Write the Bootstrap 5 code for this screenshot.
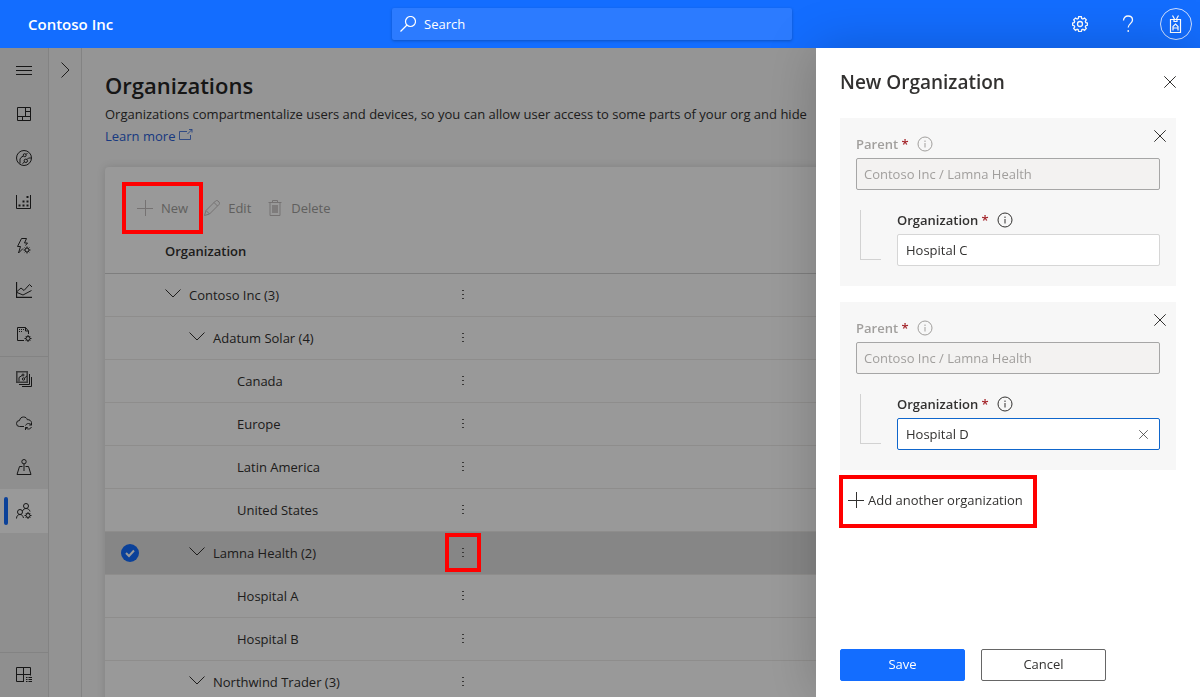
<!DOCTYPE html>
<html lang="en">
<head>
<meta charset="utf-8">
<meta name="viewport" content="width=device-width, initial-scale=1">
<title>Organizations - Contoso Inc</title>
<link href="https://cdn.jsdelivr.net/npm/bootstrap@5.3.0/dist/css/bootstrap.min.css" rel="stylesheet">
<style>
  :root { --brand: #136dff; --ink: #323130; --muted: #a19f9d; --line: #dadada; --header-h: 48px; }
  body { font-family: "Open Sans", "Noto Sans", sans-serif; font-size: 13px; line-height: 20px; color: var(--ink); background: #f8f8f8; }
  svg { display: block; fill: none; stroke: currentColor; flex: none; }
  button { color: inherit; }
  .plain-btn { background: none; border: 0; padding: 0; }

  /* header */
  .app-header { display: grid; grid-template-columns: 49fr 50fr 51fr; height: var(--header-h); background: var(--brand); color: #fff; }
  .brand-name { font-size: 15px; font-weight: 600; color: #fff; padding-left: 28px; }
  .search-box { height: 32px; background: #2c7bff; border-radius: 2px; box-shadow: 0 1px 3px rgba(0, 0, 0, .25); }
  .search-box input { background: none; border: 0; outline: 0; color: #fff; padding: 0; }
  .search-box input::placeholder { color: #fff; opacity: 1; }
  .header-btn { width: 48px; height: 48px; }
  .avatar-ring { width: 32px; height: 32px; border: 1px solid #cfe0ff; }

  /* navigation */
  .side-rail { width: 49px; background: #efefef; border-right: 1px solid var(--line); }
  .side-rail a { height: 44px; color: #262626; }
  .side-rail a.active { background: #fff; position: relative; }
  .side-rail a.active::before { content: ""; position: absolute; left: 4px; top: 8px; bottom: 8px; width: 4px; border-radius: 2px; background: var(--brand); }
  .rail-group { border-top: 1px solid var(--line); }
  .sub-rail { width: 33px; border-right: 1px solid var(--line); background: #f6f6f6; }
  .sub-rail button { height: 44px; }

  /* content */
  .content { padding: 23px 0 0 23px; }
  .content h1 { font-size: 22px; line-height: 28px; font-weight: 600; color: #262626; }
  .content a { color: #2a5fd6; }
  .intro { line-height: 22px; white-space: nowrap; }
  .org-card { margin-top: 20px; background: #fff; border-radius: 4px 0 0 0; box-shadow: 0 0 8px rgba(0, 0, 0, .13); padding-top: 19px; }
  .toolbar { height: 44px; padding-left: 32px; color: var(--muted); }
  .toolbar svg { color: #c4bfbf; }
  .org-table { width: 100%; table-layout: fixed; border-collapse: collapse; }
  .org-table th, .org-table td { height: 43px; padding: 0; vertical-align: middle; border-bottom: 1px solid #edebe9; }
  .org-table thead th { font-weight: 600; border-bottom-color: #d2d2d2; }
  .org-table tr.selected td { background: #dfdfdf; }
  .org-table .check-col { width: 60px; }
  .org-table .name-col { width: 282px; }
  .org-table .menu-col { width: 32px; }
  .level-1 { padding-left: 24px; }
  .level-2 { padding-left: 72px; }
  .more-btn { width: 32px; height: 31px; color: #605e5c; }

  /* red frames lie over the dimmed page */
  .framed { position: relative; }
  .frame { position: absolute; z-index: 1060; border: 4px solid #f00; pointer-events: none; }
  .frame-new { inset: -4px -15px -4px -15px; }
  .frame-more { inset: -4px -2px; }
  .frame-add { inset: -11px -14px -14px -9px; }

  /* panel */
  .page-dim { position: fixed; inset: var(--header-h) 0 0 0; z-index: 1040; background: rgba(0, 0, 0, .4); }
  .org-panel.offcanvas { --bs-offcanvas-width: 384px; top: var(--header-h); border: 0; color: var(--ink); background: #fff; box-shadow: 0 0 50px rgba(0, 0, 0, .2); }
  .org-panel h2 { font-size: 19px; line-height: 28px; font-weight: 600; }
  .org-panel form { padding: 22px 24px 16px; }
  .entry { background: #f7f7f7; padding: 16px 16px 20px; position: relative; }
  .entry-close { position: absolute; top: 10px; right: 8px; width: 16px; height: 16px; }
  .entry label { font-weight: 600; }
  .entry .req { color: #a4262c; }
  .entry .form-control { height: 32px; border-radius: 2px; font-size: 13px; padding: 0 8px; color: var(--ink); border-color: #d6d6d6; box-shadow: none; }
  .entry .form-control:disabled { background: #f3f2f1; border-color: #a6a6a6; color: var(--muted); padding: 0 7px; }
  .entry .form-control.is-current { border-color: #0f66cc; }
  .muted { color: var(--muted); }
  .branch { width: 21px; height: 50px; margin-left: 4px; border-left: 1px solid #d2d2d2; border-bottom: 1px solid #d2d2d2; }
  .child { margin-top: 20px; gap: 16px; }
  .clear-btn { position: absolute; right: 8px; top: 8px; }
  .panel-btn { width: 125px; height: 32px; border-radius: 2px; font-size: 13px; padding: 0; }
  .panel-save { background: var(--brand); border-color: var(--brand); color: #fff; }
  .panel-cancel { background: #fff; border-color: #666; color: var(--ink); }
</style>
</head>
<body class="vh-100 overflow-hidden d-flex flex-column">

<svg width="0" height="0" class="position-absolute" aria-hidden="true">
  <symbol id="i-down" viewBox="0 0 16 16"><path d="M.5 4.500 8 12l7.500-7.500"/></symbol>
  <symbol id="i-x" viewBox="0 0 12 12"><path d="M.3.300l11.400 11.400M11.700.300.300 11.700"/></symbol>
  <symbol id="i-plus" viewBox="0 0 16 16"><path d="M8.500 0v16M0 8.500h16"/></symbol>
  <symbol id="i-more" viewBox="0 0 4 12"><path d="M1 1.500h2M1 5.500h2M1 9.500h2"/></symbol>
  <symbol id="i-info" viewBox="0 0 16 16"><circle cx="8" cy="8" r="7"/><path d="M8 7v4.500M8 4.500V6"/></symbol>
  <symbol id="i-gear" viewBox="0 0 16 16"><path stroke-width="1.300" d="M6.700.6h2.600l.4 1.900 1.200.5 1.600-1 1.800 1.800-1 1.600.5 1.200 1.700.4v2.200l-1.700.5-.5 1.200 1 1.600-1.800 1.800-1.600-1-1.200.5-.4 1.800H6.700l-.4-1.800-1.200-.5-1.600 1-1.800-1.800 1-1.600-.5-1.200L.5 9.200V7l1.700-.4.5-1.200-1-1.600L3.500 2l1.600 1 1.200-.5z"/><circle cx="8" cy="8" r="2.500" stroke-width="1.300"/></symbol>
</svg>

<header class="app-header">
  <div class="d-flex align-items-center"><a href="#" class="brand-name text-decoration-none">Contoso Inc</a></div>
  <label class="search-box d-flex align-items-center align-self-center gap-2 px-2">
    <svg width="16" height="16" viewBox="0 0 16 16" stroke-width="1.200"><circle cx="10.500" cy="5.500" r="5"/><path d="M7 9 .5 15.500"/></svg>
    <input type="search" class="flex-grow-1" placeholder="Search" aria-label="Search">
  </label>
  <div class="d-flex justify-content-end">
    <button type="button" class="plain-btn header-btn d-flex align-items-center justify-content-center" aria-label="Settings"><svg width="16" height="16"><use href="#i-gear"/></svg></button>
    <button type="button" class="plain-btn header-btn d-flex align-items-center justify-content-center" aria-label="Help"><svg width="12" height="18" viewBox="0 0 12 18" stroke-width="1.300"><path d="M1.500 5.500C1.500 2.700 3.500 1 6 1s4.500 1.600 4.500 4c0 3.300-4.300 4-4.300 7.500M6.200 15v2"/></svg></button>
    <button type="button" class="plain-btn header-btn d-flex align-items-center justify-content-center" aria-label="Account">
      <span class="avatar-ring rounded-circle d-flex align-items-center justify-content-center"><svg width="14" height="18" viewBox="0 0 14 18" stroke-width="1.200"><path d="M1.500 4.500h10v13h-10zM3.500.5l2 3.500M9.500.5l-2 3.500M5 4.500h3v2H5zM4 15.500v-4L6.500 9 9 11.500v4M4 13h5"/></svg></span>
    </button>
  </div>
</header>

<div class="d-flex flex-grow-1 overflow-hidden">
  <nav class="side-rail d-flex flex-column flex-shrink-0" aria-label="Main">
    <a href="#" class="d-flex align-items-center justify-content-center" aria-label="Menu"><svg width="16" height="16" viewBox="0 0 16 16"><path d="M0 4.500h16M0 8.500h16M0 12.500h16"/></svg></a>
    <a href="#" class="d-flex align-items-center justify-content-center" aria-label="Dashboards"><svg width="16" height="16" viewBox="0 0 16 16"><path d="M1.500 1.500h13v13h-13zM9.500 1.500v9M9.500 5.500h5M1.500 10.500h13M6.500 10.500v4"/></svg></a>
    <a href="#" class="d-flex align-items-center justify-content-center" aria-label="Devices"><svg width="16" height="16" viewBox="0 0 16 16"><circle cx="8" cy="8" r="7.500"/><circle cx="8.700" cy="5.200" r="1.500"/><circle cx="9.800" cy="10.800" r="1.700"/><path d="M7.300 6 5 7.500 4 9v4.500M8.500 12l-2 1.500M11 9.500l1.500-1.500H15M10 4.500l1.500-1.500"/></svg></a>
    <a href="#" class="d-flex align-items-center justify-content-center" aria-label="Device groups"><svg width="16" height="16" viewBox="0 0 16 16"><path d="M.5 1v13.500h14V1"/><path d="M2.500 11.500h2m2 0h2m2 0h2M6.500 7.500h2m2 0h2M10.500 3h2" stroke-width="2"/></svg></a>
    <a href="#" class="d-flex align-items-center justify-content-center" aria-label="Rules"><svg width="16" height="16" viewBox="0 0 16 16"><path d="M5.500.5h5L8.500 5h3L9.500 7.500M5.500.5 1.500 8.500h3l-2 6.500L7 10.500"/><circle cx="11" cy="12" r="2"/><path d="M11 8.500V10M11 14v1.500M7.500 12H9M13 12h1.500M8.700 9.500l1 1M12.300 13.300l1 1M13.300 9.500l-1 1M9.700 13.300l-1 1"/></svg></a>
    <a href="#" class="d-flex align-items-center justify-content-center" aria-label="Analytics"><svg width="16" height="16" viewBox="0 0 16 16"><path d="M.5 0v15.500H16" stroke-width="1.300"/><path d="M1 9.500 5 6l3 2.500 5.500-6L16 5M1 10.500l6 2.500 8.500-4.500"/></svg></a>
    <a href="#" class="d-flex align-items-center justify-content-center" aria-label="Jobs"><svg width="16" height="16" viewBox="0 0 16 16"><path d="M8 14.500H1.500v-13h8L12.500 5v3M9.500 1.500V5h3"/><path d="M3 3.500h5M3 5.500h4" stroke-dasharray="1 1"/><circle cx="12" cy="12.500" r="2"/><path d="M12 9v1.500M12 14.500V16M8.500 12.500H10M14 12.500h1.500M9.700 10l1 1M13.300 13.800l1 1M14.300 10l-1 1M10.700 13.800l-1 1"/></svg></a>
    <div class="rail-group">
      <a href="#" class="d-flex align-items-center justify-content-center" aria-label="Device templates"><svg width="16" height="16" viewBox="0 0 16 16"><path d="M.8.800h10.400v10.400H.8z" stroke-width="1.600" opacity=".7"/><path d="M13.500 3v10.500H3M15.500 6v9.500H6"/><circle cx="7" cy="4" r="1"/><circle cx="7.500" cy="8" r="1.200"/><path d="M6 4.500 3 6.500v4M8.500 7 11 5"/></svg></a>
      <a href="#" class="d-flex align-items-center justify-content-center" aria-label="Data export"><svg width="16" height="16" viewBox="0 0 16 16"><path d="M8 11.500H3.500a3 3 0 0 1 0-6c.5-2.300 2-3.500 4-3.500s3.300 1 3.800 2.700c2.200-.2 3.700.8 4.200 2.800"/><path d="M9.500 10.500c.8-1.500 2-2 3-2 1.200 0 2.200.6 3 1.500V7.500M15.500 10h-2.300M15.500 12c-.8 1.500-1.800 2-3 2s-2.200-.6-3-1.500V15M9.500 12.500h2.300"/></svg></a>
      <a href="#" class="d-flex align-items-center justify-content-center" aria-label="Customization"><svg width="16" height="16" viewBox="0 0 16 16"><circle cx="8" cy="2.700" r="2.200"/><path d="M8 5v7M6.500 7.500h-3l-2.500 8h14l-2.500-8h-3"/></svg></a>
      <a href="#" class="active d-flex align-items-center justify-content-center" aria-label="Permissions"><svg width="16" height="16" viewBox="0 0 16 16"><circle cx="10" cy="3" r="2.500"/><circle cx="4" cy="9" r="2.500"/><path d="M.5 15.500C.5 13 2 11.500 4 11.500S7 13 7.500 15M6.500 8C7 6.500 8.500 5.500 10 5.500c2 0 3.500 1 4 3"/><circle cx="12" cy="12.500" r="2"/><path d="M12 9v1.500M12 14.500V16M8.500 12.500H10M14 12.500h1.500M9.700 10l1 1M13.300 13.800l1 1M14.300 10l-1 1M10.700 13.800l-1 1"/></svg></a>
    </div>
    <div class="rail-group mt-auto">
      <a href="#" class="d-flex align-items-center justify-content-center" aria-label="Application templates"><svg width="16" height="16" viewBox="0 0 16 16"><path d="M8 14.500H.5V.5h14v8M.5 7.500h14M7.500.5v14"/><path d="M10 10.500h1.500M12.500 10.500H16M10 12.500h1.500M12.500 12.500H16M10 14.500h1.500M12.500 14.500H16"/></svg></a>
    </div>
  </nav>
  <div class="sub-rail flex-shrink-0">
    <button type="button" class="plain-btn w-100 d-flex align-items-center justify-content-center" aria-label="Expand"><svg width="16" height="16" viewBox="0 0 16 16"><path d="M4.500.5 12 8l-7.500 7.500"/></svg></button>
  </div>

  <main class="content flex-grow-1 overflow-hidden">
    <h1 class="mb-0">Organizations</h1>
    <p class="intro mb-0 pt-1">Organizations compartmentalize users and devices, so you can allow user access to some parts of your org and hide</p>
    <p class="intro d-flex mb-0"><a href="#" class="text-decoration-none d-flex gap-1">Learn more <svg width="14" height="12" viewBox="0 0 14 12" class="mt-1"><path d="M8 2.500H.5v8h11V6M8.500 5 13 .5M10 .5h3v3" opacity=".8"/></svg></a></p>

    <section class="org-card" aria-label="Organization list">
      <div class="toolbar d-flex gap-3">
        <button type="button" class="plain-btn framed d-flex align-items-center gap-2"><svg width="16" height="16"><use href="#i-plus"/></svg>New<span class="frame frame-new"></span></button>
        <button type="button" class="plain-btn d-flex align-items-center gap-2"><svg width="16" height="16" viewBox="0 0 16 16"><path d="M.5 15.500l1.500-5L11.500 1a1.800 1.800 0 0 1 2.500 0l1 1a1.800 1.800 0 0 1 0 2.500L5.500 14zM10 2.500 13.500 6M2 10.500 5.500 14"/></svg>Edit</button>
        <button type="button" class="plain-btn d-flex align-items-center gap-2"><svg width="16" height="16" viewBox="0 0 16 16"><path d="M1.500 2.500h13M5.500 2.500v-2h5v2M3 2.500v13h10v-13"/><path d="M6 5v8M8 5v8M10 5v8" stroke-width="1.500"/></svg>Delete</button>
      </div>
      <table class="org-table">
        <colgroup><col class="check-col"><col class="name-col"><col class="menu-col"><col></colgroup>
        <thead><tr><th></th><th scope="col">Organization</th><th></th><th></th></tr></thead>
        <tbody>
          <tr><td></td><td><div class="d-flex gap-2"><svg width="16" height="16"><use href="#i-down"/></svg>Contoso Inc (3)</div></td><td><button type="button" class="plain-btn more-btn d-flex align-items-center justify-content-center" aria-label="More"><svg width="4" height="12"><use href="#i-more"/></svg></button></td><td></td></tr>
          <tr><td></td><td><div class="level-1 d-flex gap-2"><svg width="16" height="16"><use href="#i-down"/></svg>Adatum Solar (4)</div></td><td><button type="button" class="plain-btn more-btn d-flex align-items-center justify-content-center" aria-label="More"><svg width="4" height="12"><use href="#i-more"/></svg></button></td><td></td></tr>
          <tr><td></td><td><div class="level-2">Canada</div></td><td><button type="button" class="plain-btn more-btn d-flex align-items-center justify-content-center" aria-label="More"><svg width="4" height="12"><use href="#i-more"/></svg></button></td><td></td></tr>
          <tr><td></td><td><div class="level-2">Europe</div></td><td><button type="button" class="plain-btn more-btn d-flex align-items-center justify-content-center" aria-label="More"><svg width="4" height="12"><use href="#i-more"/></svg></button></td><td></td></tr>
          <tr><td></td><td><div class="level-2">Latin America</div></td><td><button type="button" class="plain-btn more-btn d-flex align-items-center justify-content-center" aria-label="More"><svg width="4" height="12"><use href="#i-more"/></svg></button></td><td></td></tr>
          <tr><td></td><td><div class="level-2">United States</div></td><td><button type="button" class="plain-btn more-btn d-flex align-items-center justify-content-center" aria-label="More"><svg width="4" height="12"><use href="#i-more"/></svg></button></td><td></td></tr>
          <tr class="selected"><td><svg width="18" height="18" viewBox="0 0 18 18" class="ms-3" stroke="none"><circle cx="9" cy="9" r="9" fill="#136dff" stroke="none"/><path d="M5 9l3 3 5-5.500" stroke="#fff" stroke-width="2"/></svg></td><td><div class="level-1 d-flex gap-2"><svg width="16" height="16"><use href="#i-down"/></svg>Lamna Health (2)</div></td><td><button type="button" class="plain-btn more-btn framed d-flex align-items-center justify-content-center" aria-label="More"><svg width="4" height="12"><use href="#i-more"/></svg><span class="frame frame-more"></span></button></td><td></td></tr>
          <tr><td></td><td><div class="level-2">Hospital A</div></td><td><button type="button" class="plain-btn more-btn d-flex align-items-center justify-content-center" aria-label="More"><svg width="4" height="12"><use href="#i-more"/></svg></button></td><td></td></tr>
          <tr><td></td><td><div class="level-2">Hospital B</div></td><td><button type="button" class="plain-btn more-btn d-flex align-items-center justify-content-center" aria-label="More"><svg width="4" height="12"><use href="#i-more"/></svg></button></td><td></td></tr>
          <tr><td></td><td><div class="level-1 d-flex gap-2"><svg width="16" height="16"><use href="#i-down"/></svg>Northwind Trader (3)</div></td><td><button type="button" class="plain-btn more-btn d-flex align-items-center justify-content-center" aria-label="More"><svg width="4" height="12"><use href="#i-more"/></svg></button></td><td></td></tr>
        </tbody>
      </table>
    </section>
  </main>
</div>

<div class="page-dim"></div>

<aside class="org-panel offcanvas offcanvas-end show" data-bs-backdrop="false" tabindex="-1" aria-labelledby="panel-title">
  <div class="d-flex align-items-center justify-content-between px-4 pt-3 mt-1">
    <h2 id="panel-title" class="mb-0">New Organization</h2>
    <button type="button" class="plain-btn" aria-label="Close"><svg width="12" height="12"><use href="#i-x"/></svg></button>
  </div>
  <form class="flex-grow-1 d-flex flex-column">
    <div class="entry mb-3">
      <button type="button" class="plain-btn entry-close d-flex align-items-center justify-content-center" aria-label="Remove"><svg width="12" height="12"><use href="#i-x"/></svg></button>
      <div class="muted d-flex align-items-center gap-2 mb-1"><label for="parent1">Parent <span class="req">*</span></label><svg width="16" height="16"><use href="#i-info"/></svg></div>
      <input id="parent1" class="form-control" value="Contoso Inc / Lamna Health" disabled>
      <div class="child d-flex">
        <div class="branch flex-shrink-0"></div>
        <div class="flex-grow-1">
          <div class="d-flex align-items-center gap-2 mb-1"><label for="org1">Organization <span class="req">*</span></label><svg width="16" height="16"><use href="#i-info"/></svg></div>
          <input id="org1" class="form-control" value="Hospital C">
        </div>
      </div>
    </div>
    <div class="entry mb-3">
      <button type="button" class="plain-btn entry-close d-flex align-items-center justify-content-center" aria-label="Remove"><svg width="12" height="12"><use href="#i-x"/></svg></button>
      <div class="muted d-flex align-items-center gap-2 mb-1"><label for="parent2">Parent <span class="req">*</span></label><svg width="16" height="16"><use href="#i-info"/></svg></div>
      <input id="parent2" class="form-control" value="Contoso Inc / Lamna Health" disabled>
      <div class="child d-flex">
        <div class="branch flex-shrink-0"></div>
        <div class="flex-grow-1">
          <div class="d-flex align-items-center gap-2 mb-1"><label for="org2">Organization <span class="req">*</span></label><svg width="16" height="16"><use href="#i-info"/></svg></div>
          <div class="position-relative">
            <input id="org2" class="form-control is-current" value="Hospital D">
            <button type="button" class="plain-btn clear-btn p-1" aria-label="Clear"><svg width="9" height="9"><use href="#i-x"/></svg></button>
          </div>
        </div>
      </div>
    </div>
    <button type="button" class="plain-btn framed align-self-start d-flex align-items-center gap-1 ms-2 py-1"><svg width="16" height="16"><use href="#i-plus"/></svg><span>Add another organization</span><span class="frame frame-add"></span></button>
    <div class="d-flex gap-3 mt-auto">
      <button type="submit" class="btn panel-btn panel-save">Save</button>
      <button type="button" class="btn panel-btn panel-cancel">Cancel</button>
    </div>
  </form>
</aside>

<script src="https://cdn.jsdelivr.net/npm/bootstrap@5.3.0/dist/js/bootstrap.bundle.min.js"></script>
</body>
</html>
